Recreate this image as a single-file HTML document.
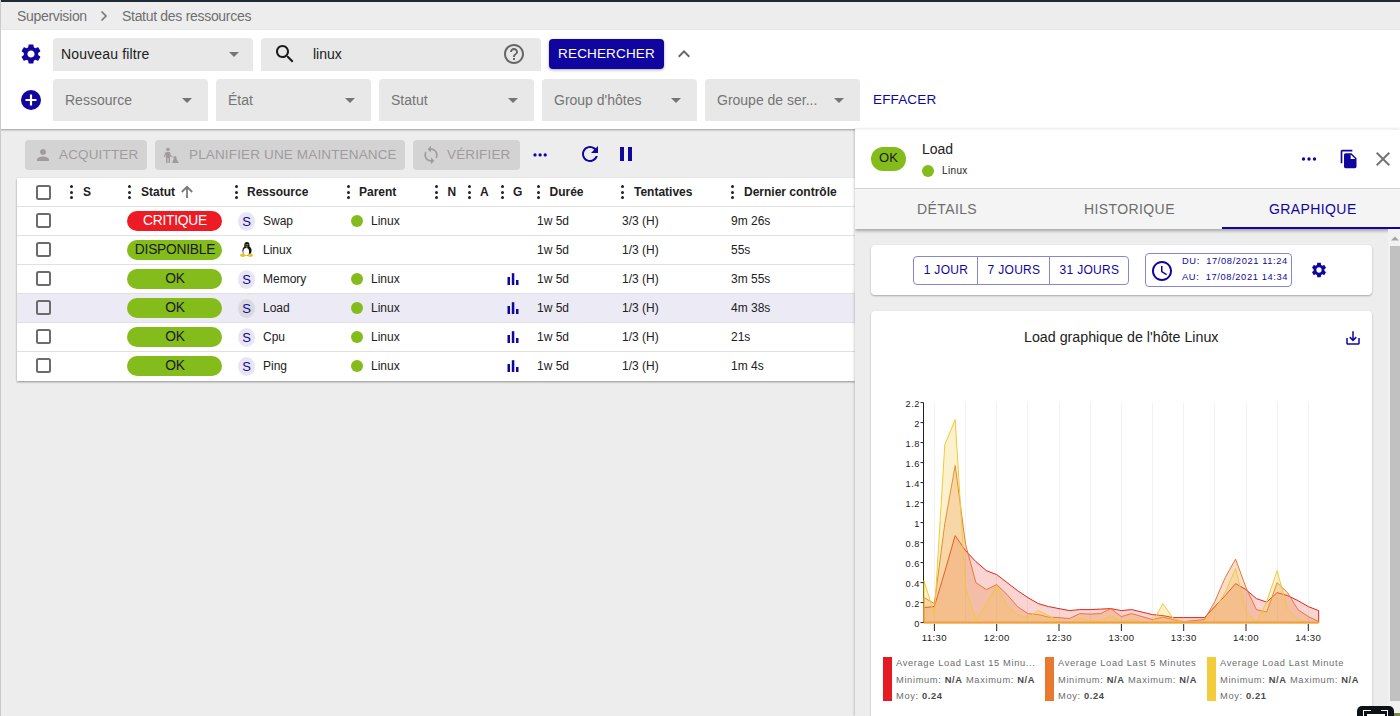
<!DOCTYPE html>
<html><head><meta charset="utf-8">
<style>
*{box-sizing:border-box}
html,body{margin:0;padding:0}
body{width:1400px;height:716px;overflow:hidden;position:relative;background:#ededed;font-family:"Liberation Sans",sans-serif;color:#212121}
.a{position:absolute}
#topband{left:0;top:0;width:1400px;height:2px;background:#1f2b34}
#leftb{left:0;top:0;width:1px;height:716px;background:#cbcbcb;z-index:50}
#bc{left:0;top:2px;width:1400px;height:28px;background:#ededed;font-size:14px;letter-spacing:-0.3px;color:#6f6f6f}
#filters{left:0;top:30px;width:1400px;height:99px;background:#fff;box-shadow:0 1px 2px rgba(0,0,0,.35)}
.sel{background:#e8e8e8;border-radius:4px 4px 0 0}
.sel .tri{position:absolute;width:0;height:0;border-left:5px solid transparent;border-right:5px solid transparent;border-top:5px solid #757575}
.ph{position:absolute;font-size:14px;color:#757575;white-space:nowrap}

#tb .dbtn{position:absolute;top:140px;height:30px;background:#d3d3d3;border-radius:4px;color:#a19ba0;font-size:13.5px;letter-spacing:.15px;line-height:30px;white-space:nowrap}
#tbl{left:17px;top:178px;width:838px;height:203px;background:#fff;box-shadow:0 1px 2px rgba(0,0,0,.4)}
.hd{position:absolute;top:0;height:28px;font-size:12px;font-weight:bold;color:#212121;line-height:28px;white-space:nowrap}
.dots{position:absolute;width:3px;height:14px;top:7px}
.dots i{position:absolute;left:0;width:3px;height:3px;border-radius:50%;background:#212121}
.row{position:absolute;left:0;width:838px;height:29px;border-top:1px solid #e0e0e0}
.cb{position:absolute;left:18.5px;width:15px;height:15px;border:2px solid #6b6b6b;border-radius:2.5px}
.chip{position:absolute;left:110px;top:4px;width:95px;height:20px;border-radius:10px;background:#84bc1c;color:#1b1b1b;font-size:13.8px;letter-spacing:-.25px;text-align:center;line-height:20px;padding-left:1px}
.av{position:absolute;left:221px;top:5px;width:17px;height:19px;border-radius:50%;background:#e8e6f3;color:#10069f;font-size:13px;text-align:center;line-height:19px}
.cell{position:absolute;top:0;font-size:12px;color:#212121;line-height:28px;white-space:nowrap}
.gd{position:absolute;left:334px;top:8px;width:12px;height:12px;border-radius:50%;background:#84bc1c}

#panel{left:855px;top:129px;width:545px;height:587px;background:#ededed;box-shadow:-1px 0 2px rgba(0,0,0,.18);z-index:10;overflow:hidden}
#phead{left:0;top:0;width:545px;height:60px;background:#fff;border-bottom:1px solid #d6d6d6;border-top:1px solid #f4f4f4}
#tabs{left:0;top:60px;width:545px;height:40px;background:#f4f4f4;box-shadow:0 2px 3px rgba(0,0,0,.3);font-size:14px;letter-spacing:.4px;color:#6d6d6d}
.card{position:absolute;background:#fff;border-radius:4px;box-shadow:0 1px 2px rgba(0,0,0,.3)}
.ob{position:absolute;top:0;height:27px;font-size:12px;letter-spacing:.3px;color:#10069f;line-height:26px;text-align:center}
.lg{font-size:9.3px;letter-spacing:.65px;line-height:16.5px;color:#6d6d6d;white-space:nowrap}
.lg b{color:#4a4a4a}
.btn{font-size:13.5px;letter-spacing:.15px;white-space:nowrap}
</style></head><body>
<div id="topband" class="a"></div>
<div id="leftb" class="a"></div>
<div id="bc" class="a">
  <span class="a" style="left:17px;top:6px">Supervision</span>
  <svg class="a" style="left:99px;top:8px" width="10" height="12" viewBox="0 0 10 12"><path d="M2.5 1.5 L7 6 L2.5 10.5" fill="none" stroke="#757575" stroke-width="1.6"/></svg>
  <span class="a" style="left:122px;top:6px">Statut des ressources</span>
</div>
<div id="filters" class="a">
  <svg class="a" style="left:19px;top:12px" width="24" height="24" viewBox="0 0 24 24"><path fill="#10069f" d="M19.14 12.94c.04-.3.06-.61.06-.94 0-.32-.02-.64-.07-.94l2.03-1.58c.18-.14.23-.41.12-.61l-1.92-3.32c-.12-.22-.37-.29-.59-.22l-2.39.96c-.5-.38-1.03-.7-1.62-.94l-.36-2.54c-.04-.24-.24-.41-.48-.41h-3.84c-.24 0-.43.17-.47.41l-.36 2.54c-.59.24-1.13.57-1.62.94l-2.39-.96c-.22-.08-.47 0-.59.22L2.74 8.87c-.12.21-.08.47.12.61l2.03 1.58c-.05.3-.09.63-.09.94s.02.64.07.94l-2.03 1.58c-.18.14-.23.41-.12.61l1.92 3.32c.12.22.37.29.59.22l2.39-.96c.5.38 1.03.7 1.62.94l.36 2.54c.05.24.24.41.48.41h3.84c.24 0 .44-.17.47-.41l.36-2.54c.59-.24 1.13-.56 1.62-.94l2.39.96c.22.08.47 0 .59-.22l1.92-3.32c.12-.22.07-.47-.12-.61l-2.01-1.58zM12 15.6c-1.98 0-3.6-1.62-3.6-3.6s1.62-3.6 3.6-3.6 3.6 1.62 3.6 3.6-1.62 3.6-3.6 3.6z"/></svg>
  <div class="a sel" style="left:53px;top:8px;width:200px;height:33px">
    <span class="a" style="left:8px;top:8px;font-size:14px;letter-spacing:.15px;color:#212121">Nouveau filtre</span>
    <span class="tri" style="left:176px;top:14px"></span>
  </div>
  <div class="a sel" style="left:261px;top:8px;width:280px;height:33px">
    <svg class="a" style="left:12px;top:4px" width="24" height="24" viewBox="0 0 24 24"><path fill="#1b1b1b" d="M15.5 14h-.79l-.28-.27C15.41 12.59 16 11.11 16 9.5 16 5.91 13.09 3 9.5 3S3 5.91 3 9.5 5.91 16 9.5 16c1.61 0 3.09-.59 4.23-1.57l.27.28v.79l5 4.99L20.49 19l-4.99-5zm-6 0C7.01 14 5 11.99 5 9.5S7.01 5 9.5 5 14 7.01 14 9.5 11.99 14 9.5 14z"/></svg>
    <span class="a" style="left:52px;top:8px;font-size:14px;color:#212121">linux</span>
    <svg class="a" style="left:241px;top:4px" width="24" height="24" viewBox="0 0 24 24"><path fill="#666" d="M11 18h2v-2h-2v2zm1-16C6.48 2 2 6.48 2 12s4.48 10 10 10 10-4.48 10-10S17.52 2 12 2zm0 18c-4.41 0-8-3.59-8-8s3.59-8 8-8 8 3.59 8 8-3.59 8-8 8zm0-14c-2.21 0-4 1.79-4 4h2c0-1.1.9-2 2-2s2 .9 2 2c0 2-3 1.75-3 5h2c0-2.25 3-2.5 3-5 0-2.21-1.79-4-4-4z"/></svg>
  </div>
  <div class="a btn" style="left:549px;top:9px;width:115px;height:30px;background:#10069f;color:#fff;border-radius:4px;box-shadow:0 1px 3px rgba(0,0,0,.35);text-align:center;line-height:30px">RECHERCHER</div>
  <svg class="a" style="left:672px;top:12px" width="24" height="24" viewBox="0 0 24 24"><path fill="#666" d="M7.41 15.41L12 10.83l4.59 4.58L18 14l-6-6-6 6z"/></svg>

  <svg class="a" style="left:19px;top:58px" width="24" height="24" viewBox="0 0 24 24"><circle cx="12" cy="12" r="10" fill="#10069f"/><path d="M12 6.5v11M6.5 12h11" stroke="#fff" stroke-width="2.2"/></svg>
  <div class="a sel" style="left:53px;top:49px;width:155px;height:42px"><span class="ph" style="left:12px;top:13px">Ressource</span><span class="tri" style="left:129px;top:19px"></span></div>
  <div class="a sel" style="left:216px;top:49px;width:155px;height:42px"><span class="ph" style="left:12px;top:13px">État</span><span class="tri" style="left:129px;top:19px"></span></div>
  <div class="a sel" style="left:379px;top:49px;width:155px;height:42px"><span class="ph" style="left:12px;top:13px">Statut</span><span class="tri" style="left:129px;top:19px"></span></div>
  <div class="a sel" style="left:542px;top:49px;width:155px;height:42px"><span class="ph" style="left:12px;top:13px">Group d'hôtes</span><span class="tri" style="left:129px;top:19px"></span></div>
  <div class="a sel" style="left:705px;top:49px;width:155px;height:42px"><span class="ph" style="left:12px;top:13px">Groupe de ser...</span><span class="tri" style="left:129px;top:19px"></span></div>
  <span class="a btn" style="left:873px;top:62px;color:#10069f">EFFACER</span>
</div>
<div id="tb">
  <div class="dbtn" style="left:25px;width:122px"><svg class="a" style="left:9px;top:6px" width="18" height="18" viewBox="0 0 24 24"><path fill="#a19ba0" d="M12 12c2.21 0 4-1.79 4-4s-1.79-4-4-4-4 1.79-4 4 1.79 4 4 4zm0 2c-2.67 0-8 1.34-8 4v2h16v-2c0-2.66-5.33-4-8-4z"/></svg><span class="a" style="left:34px;top:0">ACQUITTER</span></div>
  <div class="dbtn" style="left:155px;width:250px"><svg class="a" style="left:8px;top:7px" width="17" height="17" viewBox="0 0 17 17"><circle cx="5" cy="2.5" r="1.8" fill="#a19ba0"/><path d="M3 5h4l1 4.5-1 .5V16H5.5v-5H4.5v5H3z" fill="#a19ba0"/><path d="M2 5.5L1 10h1.3l.9-4z" fill="#a19ba0"/><path d="M7.5 8.5l2.2 1.2" stroke="#a19ba0" stroke-width="1"/><path d="M9 16l2-5h2l3 5z" fill="#a19ba0"/><circle cx="12" cy="10.5" r="1.5" fill="#a19ba0"/></svg><span class="a" style="left:34px;top:0">PLANIFIER UNE MAINTENANCE</span></div>
  <div class="dbtn" style="left:413px;width:107px"><svg class="a" style="left:8px;top:5px" width="20" height="20" viewBox="0 0 24 24"><path fill="#a19ba0" d="M12 4V1L8 5l4 4V6c3.31 0 6 2.69 6 6 0 1.01-.25 1.97-.7 2.8l1.46 1.46C19.54 15.03 20 13.57 20 12c0-4.42-3.58-8-8-8zm0 14c-3.31 0-6-2.69-6-6 0-1.01.25-1.97.7-2.8L5.24 7.74C4.46 8.97 4 10.43 4 12c0 4.42 3.58 8 8 8v3l4-4-4-4v3z"/></svg><span class="a" style="left:34px;top:0">VÉRIFIER</span></div>
  <svg class="a" style="left:532px;top:146px" width="16" height="16" viewBox="0 0 16 16"><circle cx="3" cy="8.9" r="1.65" fill="#10069f"/><circle cx="8.1" cy="8.9" r="1.65" fill="#10069f"/><circle cx="13.2" cy="8.9" r="1.65" fill="#10069f"/></svg>
  <svg class="a" style="left:578px;top:142px" width="24" height="24" viewBox="0 0 24 24"><path fill="#10069f" d="M17.65 6.35C16.2 4.9 14.21 4 12 4c-4.42 0-7.99 3.58-7.99 8s3.57 8 7.99 8c3.73 0 6.84-2.55 7.73-6h-2.08c-.82 2.33-3.04 4-5.65 4-3.31 0-6-2.69-6-6s2.69-6 6-6c1.66 0 3.14.69 4.22 1.78L13 11h7V4l-2.35 2.35z"/></svg>
  <svg class="a" style="left:614px;top:142px" width="24" height="24" viewBox="0 0 24 24"><path fill="#10069f" d="M6 19h4V5H6v14zm8-14v14h4V5h-4z"/></svg>
</div>
<div id="tbl" class="a"><span class="cb" style="top:6.5px"></span><span class="dots" style="left:53px"><i style="top:0"></i><i style="top:5.5px"></i><i style="top:11px"></i></span><span class="hd" style="left:66px">S</span><span class="dots" style="left:111px"><i style="top:0"></i><i style="top:5.5px"></i><i style="top:11px"></i></span><span class="hd" style="left:124px">Statut</span><span class="dots" style="left:218px"><i style="top:0"></i><i style="top:5.5px"></i><i style="top:11px"></i></span><span class="hd" style="left:230px">Ressource</span><span class="dots" style="left:330px"><i style="top:0"></i><i style="top:5.5px"></i><i style="top:11px"></i></span><span class="hd" style="left:342px">Parent</span><span class="dots" style="left:418px"><i style="top:0"></i><i style="top:5.5px"></i><i style="top:11px"></i></span><span class="hd" style="left:430.5px">N</span><span class="dots" style="left:451px"><i style="top:0"></i><i style="top:5.5px"></i><i style="top:11px"></i></span><span class="hd" style="left:463px">A</span><span class="dots" style="left:484px"><i style="top:0"></i><i style="top:5.5px"></i><i style="top:11px"></i></span><span class="hd" style="left:496px">G</span><span class="dots" style="left:520px"><i style="top:0"></i><i style="top:5.5px"></i><i style="top:11px"></i></span><span class="hd" style="left:532.5px">Durée</span><span class="dots" style="left:604px"><i style="top:0"></i><i style="top:5.5px"></i><i style="top:11px"></i></span><span class="hd" style="left:617px">Tentatives</span><span class="dots" style="left:714px"><i style="top:0"></i><i style="top:5.5px"></i><i style="top:11px"></i></span><span class="hd" style="left:727px">Dernier contrôle</span><svg class="a" style="left:163px;top:7px" width="14" height="14" viewBox="0 0 14 14"><path d="M7 13V1.8M1.8 7L7 1.8 12.2 7" fill="none" stroke="#7a7a7a" stroke-width="1.8"/></svg><div class="row" style="top:28px;"><span class="cb" style="top:6.3px"></span><span class="chip" style="background:#ed1c24;color:#fff">CRITIQUE</span><span class="av" style="">S</span><span class="cell" style="left:246px">Swap</span><span class="gd"></span><span class="cell" style="left:354px">Linux</span><span class="cell" style="left:520px">1w 5d</span><span class="cell" style="left:605px">3/3 (H)</span><span class="cell" style="left:714px">9m 26s</span></div><div class="row" style="top:57px;"><span class="cb" style="top:6.3px"></span><span class="chip" style="background:#84bc1c;color:#1b1b1b">DISPONIBLE</span><svg class="a" style="left:223px;top:6px" width="13" height="15" viewBox="0 0 13 15"><ellipse cx="7" cy="8.6" rx="4.6" ry="5.2" fill="#111"/><ellipse cx="6.9" cy="3.2" rx="2.6" ry="3.1" fill="#111"/><ellipse cx="6.2" cy="9.8" rx="2.9" ry="3.9" fill="#fff"/><path d="M5.4 4.6h2.6L6.7 6z" fill="#f2b600"/><circle cx="6.1" cy="2.8" r=".7" fill="#6a6"/><circle cx="7.7" cy="2.8" r=".7" fill="#6a6"/><ellipse cx="2.8" cy="13.2" rx="2.7" ry="1.7" fill="#f2c21a"/><ellipse cx="10.3" cy="13.2" rx="2.6" ry="1.7" fill="#f2c21a"/></svg><span class="cell" style="left:246px">Linux</span><span class="cell" style="left:520px">1w 5d</span><span class="cell" style="left:605px">1/3 (H)</span><span class="cell" style="left:714px">55s</span></div><div class="row" style="top:86px;"><span class="cb" style="top:6.3px"></span><span class="chip" style="background:#84bc1c;color:#1b1b1b">OK</span><span class="av" style="">S</span><span class="cell" style="left:246px">Memory</span><span class="gd"></span><span class="cell" style="left:354px">Linux</span><svg class="a" style="left:489px;top:8px" width="14" height="14" viewBox="0 0 14 14"><rect x="1.5" y="4" width="2.5" height="8" fill="#10069f"/><rect x="5.8" y="0.2" width="2.5" height="11.8" fill="#10069f"/><rect x="10" y="7" width="2.5" height="5" fill="#10069f"/></svg><span class="cell" style="left:520px">1w 5d</span><span class="cell" style="left:605px">1/3 (H)</span><span class="cell" style="left:714px">3m 55s</span></div><div class="row" style="top:115px;background:#eceaf5;"><span class="cb" style="top:6.3px"></span><span class="chip" style="background:#84bc1c;color:#1b1b1b">OK</span><span class="av" style="background:#d9d9de;">S</span><span class="cell" style="left:246px">Load</span><span class="gd"></span><span class="cell" style="left:354px">Linux</span><svg class="a" style="left:489px;top:8px" width="14" height="14" viewBox="0 0 14 14"><rect x="1.5" y="4" width="2.5" height="8" fill="#10069f"/><rect x="5.8" y="0.2" width="2.5" height="11.8" fill="#10069f"/><rect x="10" y="7" width="2.5" height="5" fill="#10069f"/></svg><span class="cell" style="left:520px">1w 5d</span><span class="cell" style="left:605px">1/3 (H)</span><span class="cell" style="left:714px">4m 38s</span></div><div class="row" style="top:144px;"><span class="cb" style="top:6.3px"></span><span class="chip" style="background:#84bc1c;color:#1b1b1b">OK</span><span class="av" style="">S</span><span class="cell" style="left:246px">Cpu</span><span class="gd"></span><span class="cell" style="left:354px">Linux</span><svg class="a" style="left:489px;top:8px" width="14" height="14" viewBox="0 0 14 14"><rect x="1.5" y="4" width="2.5" height="8" fill="#10069f"/><rect x="5.8" y="0.2" width="2.5" height="11.8" fill="#10069f"/><rect x="10" y="7" width="2.5" height="5" fill="#10069f"/></svg><span class="cell" style="left:520px">1w 5d</span><span class="cell" style="left:605px">1/3 (H)</span><span class="cell" style="left:714px">21s</span></div><div class="row" style="top:173px;"><span class="cb" style="top:6.3px"></span><span class="chip" style="background:#84bc1c;color:#1b1b1b">OK</span><span class="av" style="">S</span><span class="cell" style="left:246px">Ping</span><span class="gd"></span><span class="cell" style="left:354px">Linux</span><svg class="a" style="left:489px;top:8px" width="14" height="14" viewBox="0 0 14 14"><rect x="1.5" y="4" width="2.5" height="8" fill="#10069f"/><rect x="5.8" y="0.2" width="2.5" height="11.8" fill="#10069f"/><rect x="10" y="7" width="2.5" height="5" fill="#10069f"/></svg><span class="cell" style="left:520px">1w 5d</span><span class="cell" style="left:605px">1/3 (H)</span><span class="cell" style="left:714px">1m 4s</span></div></div>
<div id="panel" class="a">
  <div id="phead" class="a">
    <span class="a" style="left:16px;top:17px;width:35px;height:24px;border-radius:12px;background:#84bc1c;color:#1b1b1b;font-size:13px;text-align:center;line-height:22px">OK</span>
    <span class="a" style="left:67px;top:11px;font-size:14px;color:#212121">Load</span>
    <span class="a" style="left:67px;top:35px;width:12px;height:12px;border-radius:50%;background:#84bc1c"></span>
    <span class="a" style="left:87px;top:35px;font-size:10px;letter-spacing:.35px;color:#212121">Linux</span>
    <svg class="a" style="left:446px;top:21px" width="16" height="16" viewBox="0 0 16 16"><circle cx="2.5" cy="8" r="1.7" fill="#10069f"/><circle cx="8" cy="8" r="1.7" fill="#10069f"/><circle cx="13.5" cy="8" r="1.7" fill="#10069f"/></svg>
    <svg class="a" style="left:484px;top:19px" width="20" height="20" viewBox="0 0 24 24"><path fill="#10069f" d="M16 1H4c-1.1 0-2 .9-2 2v14h2V3h12V1zm-1 4l6 6v10c0 1.1-.9 2-2 2H7.99C6.89 23 6 22.1 6 21l.01-14c0-1.1.89-2 1.99-2h7zm-1 7h5.5L14 6.5V12z"/></svg>
    <svg class="a" style="left:516px;top:17px" width="24" height="24" viewBox="0 0 24 24"><path fill="#757575" d="M19 6.41L17.59 5 12 10.59 6.41 5 5 6.41 10.59 12 5 17.59 6.41 19 12 13.41 17.59 19 19 17.59 13.41 12z"/></svg>
  </div>
  <div id="tabs" class="a">
    <span class="a" style="left:62px;top:12px">DÉTAILS</span>
    <span class="a" style="left:229px;top:12px">HISTORIQUE</span>
    <span class="a" style="left:414px;top:12px;color:#10069f">GRAPHIQUE</span>
    <span class="a" style="left:367px;top:38px;width:178px;height:2px;background:#10069f"></span>
  </div>
  <div class="card" style="left:16px;top:116px;width:501px;height:50px">
    <div class="a" style="left:42px;top:11px;width:216px;height:29px;border:1px solid #8985cf;border-radius:4px">
      <span class="ob" style="left:0;width:64px">1 JOUR</span>
      <span class="a" style="left:63px;top:0;width:1px;height:27px;background:#8985cf"></span>
      <span class="ob" style="left:64px;width:72px">7 JOURS</span>
      <span class="a" style="left:135px;top:0;width:1px;height:27px;background:#8985cf"></span>
      <span class="ob" style="left:136px;width:79px">31 JOURS</span>
    </div>
    <div class="a" style="left:274px;top:8px;width:147px;height:34px;border:1px solid #8985cf;border-radius:4px">
      <svg class="a" style="left:4px;top:4.5px" width="24" height="24" viewBox="0 0 24 24"><path fill="#10069f" d="M11.99 2C6.47 2 2 6.48 2 12s4.47 10 9.99 10C17.52 22 22 17.52 22 12S17.52 2 11.99 2zM12 20c-4.42 0-8-3.58-8-8s3.58-8 8-8 8 3.58 8 8-3.58 8-8 8zm.5-13H11v6l5.25 3.15.75-1.23-4.5-2.67z"/></svg>
      <span class="a" style="left:36px;top:2px;font-size:9.3px;letter-spacing:.62px;color:#10069f;white-space:pre">DU:  17/08/2021 11:24</span>
      <span class="a" style="left:36px;top:18px;font-size:9.3px;letter-spacing:.62px;color:#10069f;white-space:pre">AU:  17/08/2021 14:34</span>
    </div>
    <svg class="a" style="left:439px;top:16px" width="18" height="18" viewBox="0 0 24 24"><path fill="#10069f" d="M19.14 12.94c.04-.3.06-.61.06-.94 0-.32-.02-.64-.07-.94l2.03-1.58c.18-.14.23-.41.12-.61l-1.92-3.32c-.12-.22-.37-.29-.59-.22l-2.39.96c-.5-.38-1.03-.7-1.62-.94l-.36-2.54c-.04-.24-.24-.41-.48-.41h-3.840c-.24 0-.43.17-.47.41l-.36 2.54c-.59.24-1.13.57-1.62.94l-2.39-.96c-.22-.08-.47 0-.59.22L2.74 8.87c-.12.21-.08.47.12.61l2.03 1.58c-.05.3-.09.63-.09.94s.02.64.07.94l-2.03 1.58c-.18.14-.23.41-.12.61l1.92 3.32c.12.22.37.29.59.22l2.39-.96c.5.38 1.03.7 1.62.94l.36 2.54c.05.24.24.41.48.41h3.84c.24 0 .44-.17.47-.41l.36-2.54c.59-.24 1.13-.56 1.62-.94l2.39.96c.22.08.47 0 .59-.22l1.92-3.32c.12-.22.07-.47-.12-.61l-2.01-1.58zM12 15.6c-1.98 0-3.6-1.62-3.6-3.6s1.62-3.6 3.6-3.6 3.6 1.62 3.6 3.6-1.62 3.6-3.6 3.6z"/></svg>
  </div>
  <div class="card" style="left:16px;top:182px;width:501px;height:420px" id="gcard">
    <span class="a" style="left:153px;top:18px;font-size:14.25px;color:#212121;white-space:nowrap">Load graphique de l'hôte Linux</span>
    <svg class="a" style="left:473px;top:18px" width="18" height="18" viewBox="0 0 24 24"><path fill="#10069f" d="M19 12v7H5v-7H3v7c0 1.1.9 2 2 2h14c1.1 0 2-.9 2-2v-7h-2zm-6 .67l2.59-2.58L17 11.5l-5 5-5-5 1.41-1.41L11 12.67V3h2z"/></svg>
    <!--CHART--><svg class="a" style="left:0;top:0" width="501" height="420" viewBox="871 311 501 420">
<line x1="934.5" y1="402.6" x2="934.5" y2="622.6" stroke="#f2f2f2" stroke-width="1"/>
<line x1="965.5" y1="402.6" x2="965.5" y2="622.6" stroke="#f2f2f2" stroke-width="1"/>
<line x1="996.5" y1="402.6" x2="996.5" y2="622.6" stroke="#f2f2f2" stroke-width="1"/>
<line x1="1027.5" y1="402.6" x2="1027.5" y2="622.6" stroke="#f2f2f2" stroke-width="1"/>
<line x1="1059.5" y1="402.6" x2="1059.5" y2="622.6" stroke="#f2f2f2" stroke-width="1"/>
<line x1="1090.5" y1="402.6" x2="1090.5" y2="622.6" stroke="#f2f2f2" stroke-width="1"/>
<line x1="1121.5" y1="402.6" x2="1121.5" y2="622.6" stroke="#f2f2f2" stroke-width="1"/>
<line x1="1152.5" y1="402.6" x2="1152.5" y2="622.6" stroke="#f2f2f2" stroke-width="1"/>
<line x1="1183.5" y1="402.6" x2="1183.5" y2="622.6" stroke="#f2f2f2" stroke-width="1"/>
<line x1="1214.5" y1="402.6" x2="1214.5" y2="622.6" stroke="#f2f2f2" stroke-width="1"/>
<line x1="1246.5" y1="402.6" x2="1246.5" y2="622.6" stroke="#f2f2f2" stroke-width="1"/>
<line x1="1277.5" y1="402.6" x2="1277.5" y2="622.6" stroke="#f2f2f2" stroke-width="1"/>
<line x1="1308.5" y1="402.6" x2="1308.5" y2="622.6" stroke="#f2f2f2" stroke-width="1"/>
<line x1="923.5" y1="402.6" x2="923.5" y2="623" stroke="#212121" stroke-width="1"/>
<polygon points="924.0,622.6 924.0,607.6 934.4,606.6 944.8,571.6 955.2,535.6 965.5,550.6 975.9,561.6 986.3,570.6 996.7,574.6 1007.1,582.6 1017.5,590.6 1027.9,597.6 1038.2,603.6 1048.6,606.6 1059.0,608.6 1069.4,610.6 1079.8,609.6 1090.2,609.6 1100.6,609.1 1110.9,608.6 1121.3,610.6 1131.7,609.6 1142.1,612.1 1152.5,614.6 1162.9,615.6 1173.3,617.6 1183.7,617.6 1194.0,617.6 1204.4,617.6 1214.8,606.6 1225.2,595.6 1235.6,583.6 1246.0,589.6 1256.4,598.6 1266.7,602.1 1277.1,592.6 1287.5,595.6 1297.9,600.6 1308.3,606.6 1318.7,610.6 1318.7,622.6" fill="#e2261c" fill-opacity="0.2" stroke="#e2261c" stroke-width="1"/>
<polygon points="924.0,622.6 924.0,597.6 934.4,603.6 944.8,523.6 955.2,465.6 965.5,544.1 975.9,582.6 986.3,589.6 996.7,584.6 1007.1,594.6 1017.5,606.6 1027.9,613.6 1038.2,614.6 1048.6,617.1 1059.0,617.6 1069.4,618.6 1079.8,613.6 1090.2,614.1 1100.6,613.6 1110.9,608.6 1121.3,616.6 1131.7,613.6 1142.1,616.6 1152.5,619.6 1162.9,617.1 1173.3,619.6 1183.7,621.6 1194.0,620.6 1204.4,619.6 1214.8,601.6 1225.2,577.6 1235.6,559.1 1246.0,587.6 1256.4,609.6 1266.7,612.1 1277.1,582.6 1287.5,592.6 1297.9,609.6 1308.3,616.6 1318.7,621.6 1318.7,622.6" fill="#e8792f" fill-opacity="0.25" stroke="#e8792f" stroke-width="1"/>
<polygon points="924.0,622.6 924.0,580.6 934.4,614.6 944.8,444.6 955.2,419.6 965.5,587.6 975.9,620.6 986.3,603.6 996.7,585.6 1007.1,605.6 1017.5,614.6 1027.9,617.6 1038.2,610.6 1048.6,615.6 1059.0,621.6 1069.4,622.6 1079.8,618.6 1090.2,620.6 1100.6,620.6 1110.9,615.6 1121.3,621.6 1131.7,619.6 1142.1,621.6 1152.5,622.6 1162.9,603.6 1173.3,618.6 1183.7,621.6 1194.0,622.6 1204.4,622.6 1214.8,609.1 1225.2,592.6 1235.6,568.6 1246.0,611.6 1256.4,622.6 1266.7,601.6 1277.1,570.6 1287.5,609.1 1297.9,619.6 1308.3,622.6 1318.7,622.6 1318.7,622.6" fill="#f2c939" fill-opacity="0.25" stroke="#f2c939" stroke-width="1"/>
<line x1="924" y1="622.6" x2="1318.7" y2="622.6" stroke="#eda13a" stroke-width="2"/>
<line x1="920.5" y1="622.6" x2="923.5" y2="622.6" stroke="#212121" stroke-width="1"/>
<text x="919.8" y="626.9" text-anchor="end" font-size="9.2" letter-spacing="0.5" fill="#212121">0</text>
<line x1="920.5" y1="602.6" x2="923.5" y2="602.6" stroke="#212121" stroke-width="1"/>
<text x="919.8" y="606.9" text-anchor="end" font-size="9.2" letter-spacing="0.5" fill="#212121">0.2</text>
<line x1="920.5" y1="582.6" x2="923.5" y2="582.6" stroke="#212121" stroke-width="1"/>
<text x="919.8" y="586.9" text-anchor="end" font-size="9.2" letter-spacing="0.5" fill="#212121">0.4</text>
<line x1="920.5" y1="562.6" x2="923.5" y2="562.6" stroke="#212121" stroke-width="1"/>
<text x="919.8" y="566.9" text-anchor="end" font-size="9.2" letter-spacing="0.5" fill="#212121">0.6</text>
<line x1="920.5" y1="542.6" x2="923.5" y2="542.6" stroke="#212121" stroke-width="1"/>
<text x="919.8" y="546.9" text-anchor="end" font-size="9.2" letter-spacing="0.5" fill="#212121">0.8</text>
<line x1="920.5" y1="522.6" x2="923.5" y2="522.6" stroke="#212121" stroke-width="1"/>
<text x="919.8" y="526.9" text-anchor="end" font-size="9.2" letter-spacing="0.5" fill="#212121">1</text>
<line x1="920.5" y1="502.6" x2="923.5" y2="502.6" stroke="#212121" stroke-width="1"/>
<text x="919.8" y="506.9" text-anchor="end" font-size="9.2" letter-spacing="0.5" fill="#212121">1.2</text>
<line x1="920.5" y1="482.6" x2="923.5" y2="482.6" stroke="#212121" stroke-width="1"/>
<text x="919.8" y="486.9" text-anchor="end" font-size="9.2" letter-spacing="0.5" fill="#212121">1.4</text>
<line x1="920.5" y1="462.6" x2="923.5" y2="462.6" stroke="#212121" stroke-width="1"/>
<text x="919.8" y="466.9" text-anchor="end" font-size="9.2" letter-spacing="0.5" fill="#212121">1.6</text>
<line x1="920.5" y1="442.6" x2="923.5" y2="442.6" stroke="#212121" stroke-width="1"/>
<text x="919.8" y="446.9" text-anchor="end" font-size="9.2" letter-spacing="0.5" fill="#212121">1.8</text>
<line x1="920.5" y1="422.6" x2="923.5" y2="422.6" stroke="#212121" stroke-width="1"/>
<text x="919.8" y="426.9" text-anchor="end" font-size="9.2" letter-spacing="0.5" fill="#212121">2</text>
<line x1="920.5" y1="402.6" x2="923.5" y2="402.6" stroke="#212121" stroke-width="1"/>
<text x="919.8" y="406.9" text-anchor="end" font-size="9.2" letter-spacing="0.5" fill="#212121">2.2</text>
<line x1="934.4" y1="624" x2="934.4" y2="631" stroke="#212121" stroke-width="1"/>
<text x="934.4" y="641" text-anchor="middle" font-size="9.6" letter-spacing="0.4" fill="#212121">11:30</text>
<line x1="996.7" y1="624" x2="996.7" y2="631" stroke="#212121" stroke-width="1"/>
<text x="996.7" y="641" text-anchor="middle" font-size="9.6" letter-spacing="0.4" fill="#212121">12:00</text>
<line x1="1059.0" y1="624" x2="1059.0" y2="631" stroke="#212121" stroke-width="1"/>
<text x="1059.0" y="641" text-anchor="middle" font-size="9.6" letter-spacing="0.4" fill="#212121">12:30</text>
<line x1="1121.4" y1="624" x2="1121.4" y2="631" stroke="#212121" stroke-width="1"/>
<text x="1121.4" y="641" text-anchor="middle" font-size="9.6" letter-spacing="0.4" fill="#212121">13:00</text>
<line x1="1183.7" y1="624" x2="1183.7" y2="631" stroke="#212121" stroke-width="1"/>
<text x="1183.7" y="641" text-anchor="middle" font-size="9.6" letter-spacing="0.4" fill="#212121">13:30</text>
<line x1="1246.0" y1="624" x2="1246.0" y2="631" stroke="#212121" stroke-width="1"/>
<text x="1246.0" y="641" text-anchor="middle" font-size="9.6" letter-spacing="0.4" fill="#212121">14:00</text>
<line x1="1308.3" y1="624" x2="1308.3" y2="631" stroke="#212121" stroke-width="1"/>
<text x="1308.3" y="641" text-anchor="middle" font-size="9.6" letter-spacing="0.4" fill="#212121">14:30</text>
</svg><!--/CHART-->
    <span class="a" style="left:12px;top:346px;width:9px;height:44px;background:#e41b23"></span><div class="a lg" style="left:25px;top:344px">Average Load Last 15 Minu...<br>Minimum: <b>N/A</b> Maximum: <b>N/A</b><br>Moy: <b>0.24</b></div><span class="a" style="left:174px;top:346px;width:9px;height:44px;background:#e8792f"></span><div class="a lg" style="left:187px;top:344px">Average Load Last 5 Minutes<br>Minimum: <b>N/A</b> Maximum: <b>N/A</b><br>Moy: <b>0.24</b></div><span class="a" style="left:336px;top:346px;width:9px;height:44px;background:#f2cc3b"></span><div class="a lg" style="left:349px;top:344px">Average Load Last Minute<br>Minimum: <b>N/A</b> Maximum: <b>N/A</b><br>Moy: <b>0.21</b></div>
  </div>
  <div class="a" style="left:533px;top:100px;width:12px;height:487px;background:#f1f1f1"></div>
  <svg class="a" style="left:535px;top:106px" width="10" height="6" viewBox="0 0 10 6"><path d="M1 5.5L5 1.5 9 5.5z" fill="#a3a3a3"/></svg>
  <div class="a" style="left:535px;top:117px;width:10px;height:455px;background:#c1c1c1"></div>
</div>
<div class="a" style="left:1357px;top:706px;width:37px;height:20px;background:#0d1216;border-radius:5px;z-index:20">
  <span class="a" style="left:6px;top:4px;width:25px;height:12px;border:1.5px solid #fff;border-bottom:none"></span>
  <span class="a" style="left:13.5px;top:2px;width:10.5px;height:4px;background:#0d1216"></span>
  <span class="a" style="left:10px;top:8px;width:17.5px;height:10px;background:#fff"></span>
</div>
<div class="a" style="left:1394px;top:713px;width:6px;height:3px;background:#7a8a4a;z-index:20"></div>
</body></html>
